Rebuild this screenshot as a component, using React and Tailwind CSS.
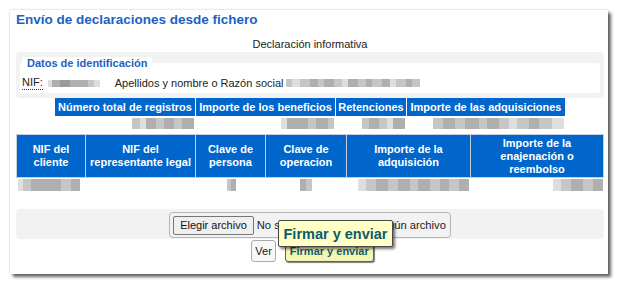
import clsx from "clsx";

// gray tones used for the pixelated (redacted) values
const SHADES = ["bg-[#dedede]", "bg-[#c6c6c6]", "bg-[#afafaf]", "bg-[#9a9a9a]"];

const BLURS = {
  nif: [[4, 0], [8, 2], [10, 3], [8, 2], [10, 2], [6, 1], [6, 0]],
  razon: [[6, 1], [8, 0], [10, 1], [8, 2], [6, 1], [10, 2], [8, 1], [6, 0], [10, 2], [8, 1], [6, 2], [10, 1], [8, 2], [6, 0], [10, 1], [6, 2], [8, 1]],
  sum1: [[8, 1], [6, 0], [10, 2], [8, 1], [10, 2], [8, 1], [12, 2]],
  sum2: [[6, 0], [9, 2], [12, 2], [8, 1], [12, 2], [6, 1]],
  sum3: [[7, 1], [10, 2], [8, 1], [6, 0], [12, 2]],
  sum4: [[10, 1], [12, 2], [10, 1], [14, 2], [8, 1], [12, 2], [10, 1], [8, 0], [12, 1], [10, 2], [13, 1], [12, 0]],
  d1: [[5, 0], [8, 1], [10, 2], [8, 2], [12, 2], [10, 1], [9, 2]],
  d3: [[4, 1], [5, 2]],
  d4: [[6, 2], [6, 1]],
  d5: [[8, 0], [10, 1], [12, 2], [10, 1], [12, 2], [8, 1], [12, 2], [10, 1], [9, 2], [10, 1], [10, 2]],
  d6: [[8, 0], [10, 1], [12, 2], [10, 1], [10, 2]],
};

function Blur({ parts, className }) {
  return (
    <div className={clsx("flex shrink-0 blur-[0.6px]", className)}>
      {parts.map(([w, s], i) => (
        <span key={i} className={SHADES[s]} style={{ width: w }} />
      ))}
    </div>
  );
}

const summary = [
  { label: "Número total de registros", w: "w-[140px]", blur: "sum1" },
  { label: "Importe de los beneficios", w: "w-[139px]", blur: "sum2" },
  { label: "Retenciones", w: "w-[70px]", blur: "sum3" },
  { label: "Importe de las adquisiciones", w: "w-[158px]", blur: "sum4" },
];

const columns = [
  { label: ["NIF del", "cliente"], w: "w-[68px]", blur: "d1", align: "justify-start pl-[1px]" },
  { label: ["NIF del", "representante legal"], w: "w-[109px]", blur: null },
  { label: ["Clave de", "persona"], w: "w-[69px]", blur: "d3", align: "justify-center pl-[2px]" },
  { label: ["Clave de", "operacion"], w: "w-[80px]", blur: "d4", align: "justify-center" },
  { label: ["Importe de la", "adquisición"], w: "w-[123px]", blur: "d5", align: "justify-end pr-[1px]" },
  { label: ["Importe de la", "enajenación o", "reembolso"], w: "w-[132px]", blur: "d6", align: "justify-end" },
];

export default function App() {
  return (
    <div className="min-h-[287px] bg-white pl-[10px] pt-[10px] font-['Liberation_Sans',Arial,sans-serif] text-[11px] leading-[13px] text-[#222]">
      <div className="relative w-[598px] bg-white pl-[6px] pr-[4px] pt-[2px] pb-[12px] shadow-[0_0_2px_rgba(0,0,0,0.25),3px_3px_3px_rgba(0,0,0,0.6)]">
        {/* Title */}
        <h1 className="text-[13.5px] leading-[16px] font-bold text-[#1b61c4]">
          Envío de declaraciones desde fichero
        </h1>
        <div className="mt-[10px] text-center">Declaración informativa</div>

        {/* Datos de identificación */}
        <div className="mt-[1px] rounded-[4px] bg-[#f2f2f2] px-[4px] pt-[5px] pb-[5px]">
          <div className="relative z-10 -mb-[7px] ml-[2px] w-fit bg-white px-[5px] font-bold text-[#1b61c4]">
            Datos de identificación
          </div>
          <div className="flex items-center rounded-[2px] bg-white pl-[2px] pt-[13px] pb-[3px]">
            <abbr className="no-underline border-b border-dotted border-[#333]" title="Número de identificación fiscal">
              NIF:
            </abbr>
            <Blur parts={BLURS.nif} className="ml-[5px] h-[7px]" />
            <span className="ml-[15px]">Apellidos y nombre o Razón social</span>
            <Blur parts={BLURS.razon} className="ml-[2px] h-[8px]" />
          </div>
        </div>

        {/* Totales */}
        <div className="mx-auto w-[510px]">
          <div className="flex gap-px bg-white">
            {summary.map((c) => (
              <div
                key={c.label}
                className={clsx(c.w, "flex h-[18px] items-center justify-center bg-[#0066cc] font-bold text-white")}
              >
                {c.label}
              </div>
            ))}
          </div>
          <div className="flex gap-px">
            {summary.map((c) => (
              <div key={c.label} className={clsx(c.w, "flex h-[18px] justify-end pt-[2px] pr-[1px]")}>
                <Blur parts={BLURS[c.blur]} className="h-[11px]" />
              </div>
            ))}
          </div>
        </div>

        {/* Detalle */}
        <div className="w-[588px]">
          <div className="flex gap-px border border-[#c3cfdc] bg-[#c3cfdc]">
            {columns.map((c) => (
              <div
                key={c.label.join(" ")}
                className={clsx(c.w, "flex h-[42px] flex-col items-center justify-center bg-[#0066cc] text-center font-bold text-white")}
              >
                {c.label.map((l) => (
                  <span key={l}>{l}</span>
                ))}
              </div>
            ))}
          </div>
          <div className="flex gap-px px-px">
            {columns.map((c) => (
              <div key={c.label.join(" ")} className={clsx(c.w, "flex h-[15px] pt-[1px]", c.align)}>
                {c.blur && <Blur parts={BLURS[c.blur]} className="h-[12px]" />}
              </div>
            ))}
          </div>
        </div>

        {/* Fichero */}
        <div className="mt-[16px] flex justify-center rounded-[4px] bg-[#f2f2f2] pt-[3px] pb-[1px]">
          <div className="flex items-center rounded-[4px] border border-[#b5b5b5] pl-[3px] pr-[4px] pt-[3px] pb-[2px]">
            <button className="h-[19px] rounded-[2px] border border-[#767676] bg-[#efefef] px-[6px] text-[#111]">
              Elegir archivo
            </button>
            <span className="ml-[3px] text-[11.2px] text-[#222]">No se ha seleccionado ningún archivo</span>
          </div>
        </div>

        <div className="mt-[1px] flex justify-center gap-[9px] pl-[5px]">
          <button className="h-[22px] rounded-[3px] border border-[#ababab] bg-[#f7f7f7] px-[3px] text-[#222]">
            Ver
          </button>
          <button className="h-[22px] rounded-[3px] border border-[#2f6f78] bg-[#f7f5b4] px-[4px] font-bold text-[#0d5d6d] shadow-[1px_1px_1px_rgba(0,0,0,0.5)]">
            Firmar y enviar
          </button>
        </div>

        {/* Tooltip */}
        <div className="absolute left-[268px] top-[210px] z-20 flex h-[27px] w-[115px] items-center justify-center rounded-[2px] border border-[#4a4a4a] bg-[#ffffc6] text-[14.5px] font-bold leading-[16px] text-[#0d5a6b] shadow-[2px_2px_3px_rgba(0,0,0,0.55)]">
          Firmar y enviar
        </div>
      </div>
    </div>
  );
}
